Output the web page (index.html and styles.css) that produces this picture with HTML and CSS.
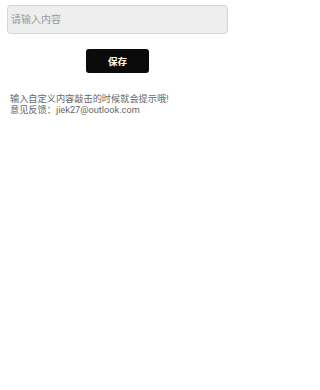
FILE: index.html
```html
<!DOCTYPE html>
<html lang="zh">
<head>
<meta charset="utf-8">
<meta name="viewport" content="width=235">
<link rel="stylesheet" href="styles.css">
</head>
<body>
<div class="page">
  <input class="field" type="text" placeholder="请输入内容">
  <div class="actions"><button class="save">保存</button></div>
  <div class="info">
    <p>输入自定义内容敲击的时候就会提示哦!</p>
    <p>意见反馈：jiek27@outlook.com</p>
  </div>
</div>
</body>
</html>
```
FILE: styles.css
```css
html, body { margin: 0; padding: 0; background: #fff; }
body { font-family: Roboto, "Noto Sans CJK SC", sans-serif; }
.page {
  box-sizing: border-box;
  width: 235px;
  padding: 5px 7px 0 7px;
  display: flex;
  flex-direction: column;
}
.field {
  box-sizing: border-box;
  width: 221px;
  height: 29px;
  margin: 0;
  padding: 0 3px;
  border: 1px solid #d4d4d4;
  border-radius: 4px;
  background: #eeeeee;
  font-family: inherit;
  font-size: 10px;
  color: #333;
  outline: none;
}
.field::placeholder { color: #9a9a9a; }
.actions { display: flex; justify-content: center; margin-top: 15px; }
.save {
  width: 63px;
  height: 24px;
  margin: 0;
  padding: 0;
  border: none;
  border-radius: 3px;
  background: #0b0b0b;
  color: #fff;
  font-family: inherit;
  font-size: 9.5px;
  font-weight: bold;
}
.info { margin-top: 20px; padding-left: 3px; color: #666; font-size: 9.2px; }
.info p { margin: 0; line-height: 11px; }
```
